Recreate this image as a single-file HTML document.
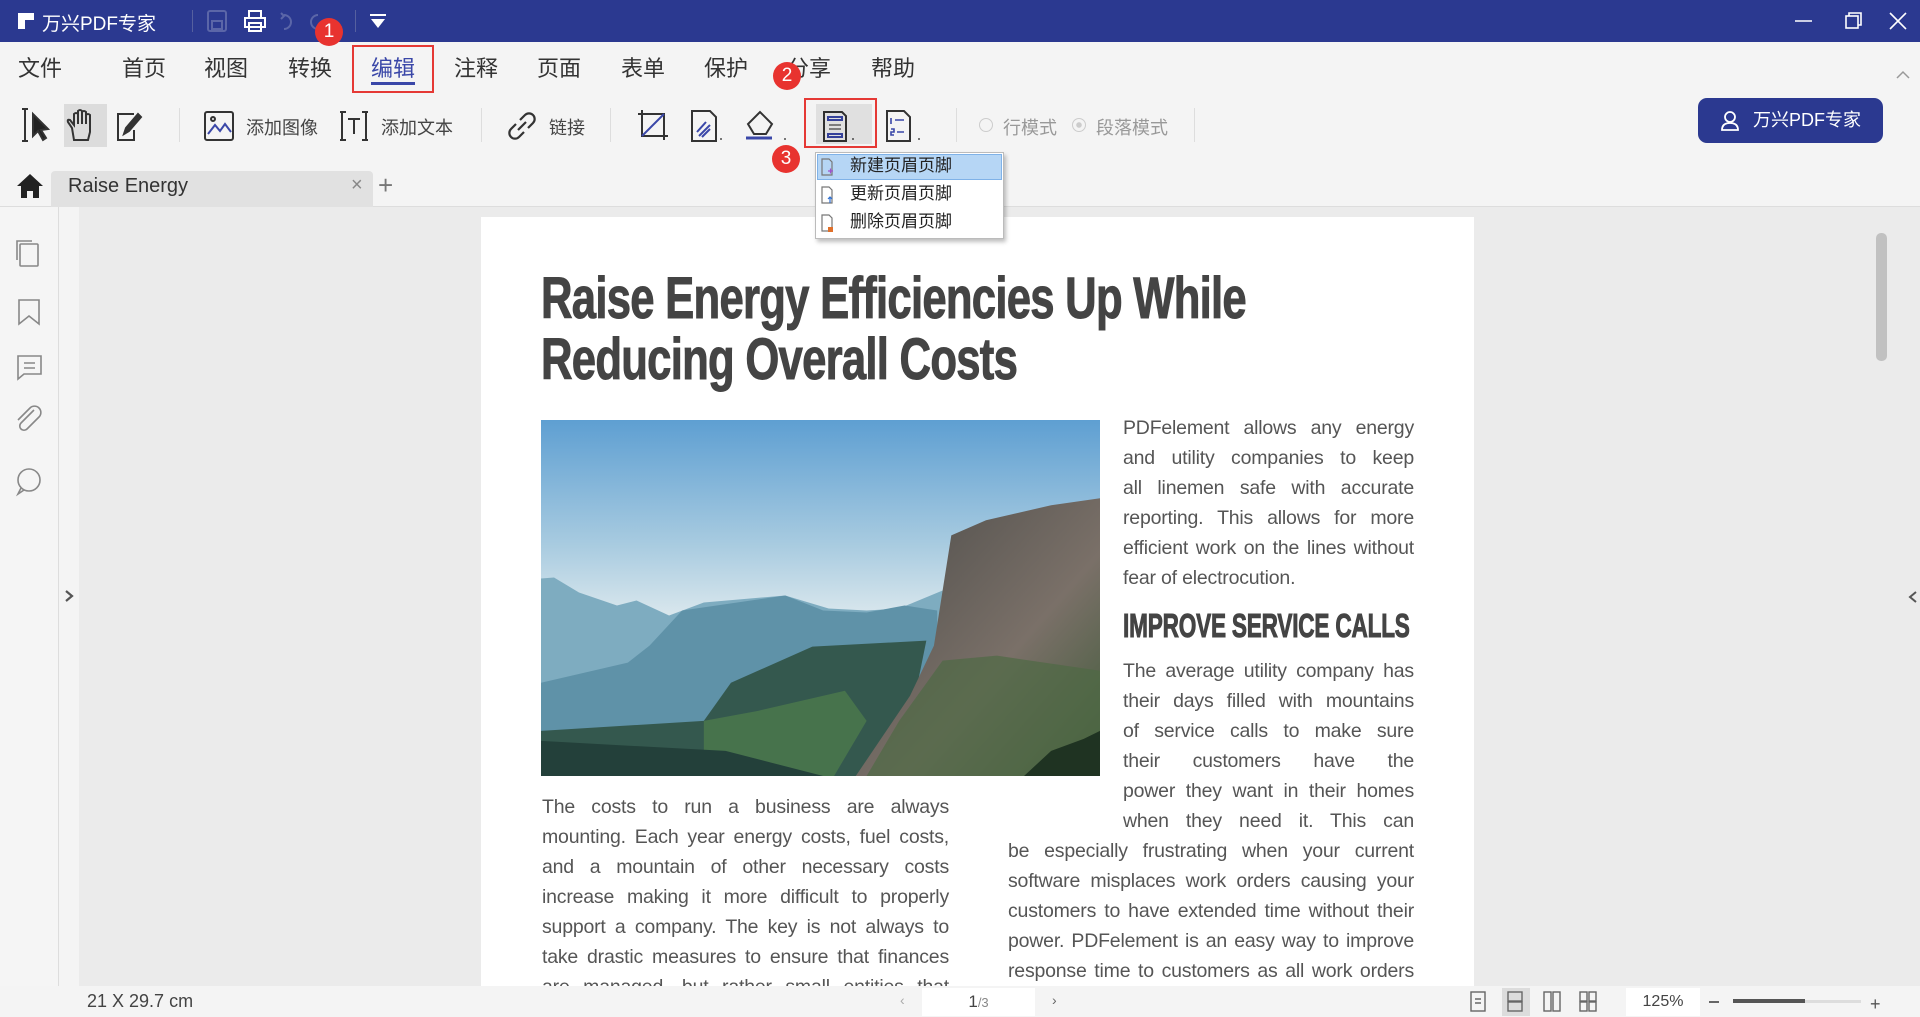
<!DOCTYPE html>
<html><head><meta charset="utf-8"><style>
*{margin:0;padding:0;box-sizing:border-box}
body{width:1920px;height:1016px;position:relative;overflow:hidden;background:#f4f4f4;font-family:"Liberation Sans","Noto Sans CJK SC",sans-serif;color:#333}
.a{position:absolute}
.menu{font-size:22px;color:#333;top:51px}
.tb{font-size:18px;color:#444;top:114px}
.circ{position:absolute;width:28px;height:28px;border-radius:50%;background:#e8332f;color:#fff;font-size:19px;text-align:center;line-height:28px}
.sep{position:absolute;top:108px;width:1px;height:34px;background:#ddd}
.ln{position:absolute;font-size:19.5px;color:#555;line-height:30px;height:30px;text-align:justify;text-align-last:justify;white-space:nowrap;letter-spacing:-0.2px}
.ln.l{text-align-last:left}
.dd{position:absolute;left:820px;width:180px;height:26px;font-size:17px;line-height:26px;padding-left:30px;color:#222}
.hd{position:absolute;font-weight:bold;color:#444;white-space:nowrap;transform-origin:0 0;-webkit-text-stroke:1px #444}
</style></head><body>
<!-- title bar -->
<div class="a" style="left:0;top:0;width:1920px;height:42px;background:#2b3990"></div>
<svg class="a" style="left:18px;top:13px" width="16" height="16"><rect x="0" y="0" width="16" height="7" fill="#fff"/><rect x="0" y="7" width="7" height="9" fill="#fff"/></svg>
<div class="a" style="left:42px;top:9px;font-size:19px;color:#fff">万兴PDF专家</div>
<div class="a" style="left:192px;top:10px;width:1px;height:22px;background:#56609f"></div>
<svg class="a" style="left:206px;top:9px" width="130" height="24" fill="none" stroke-width="2">
<rect x="2" y="2" width="18" height="20" rx="2" stroke="#5b66a8"/><rect x="6" y="12" width="10" height="8" stroke="#5b66a8"/>
<rect x="39" y="9" width="20" height="9" stroke="#fff"/><rect x="43" y="2" width="12" height="7" stroke="#fff"/><rect x="43" y="14" width="12" height="8" stroke="#fff"/>
<path d="M78 6 a7 7 0 1 1 0 14" stroke="#5b66a8"/><path d="M75 4 l3 3 -3 3" stroke="#5b66a8"/>
<path d="M112 6 a7 7 0 1 0 0 14" stroke="#5b66a8"/>
</svg>
<div class="a" style="left:355px;top:10px;width:1px;height:22px;background:#56609f"></div>
<svg class="a" style="left:369px;top:13px" width="18" height="16"><rect x="1" y="1" width="16" height="2" fill="#fff"/><path d="M2 6 L16 6 L9 15Z" fill="#fff"/></svg>
<svg class="a" style="left:1790px;top:8px" width="125" height="26" fill="none" stroke="#fff" stroke-width="1.6"><path d="M5 13 H22"/><rect x="56" y="8" width="12" height="12"/><path d="M59 8 V5 H71 V17 H68"/><path d="M100 5 L116 21 M116 5 L100 21"/></svg>
<div class="circ" style="left:315px;top:18px">1</div>
<!-- menu -->
<div class="a menu" style="left:18px">文件</div>
<div class="a menu" style="left:122px">首页</div>
<div class="a menu" style="left:204px">视图</div>
<div class="a menu" style="left:288px">转换</div>
<div class="a menu" style="left:371px;color:#3a47a8">编辑</div>
<div class="a" style="left:371px;top:82px;width:44px;height:3px;background:#3a47a8"></div>
<div class="a" style="left:352px;top:45px;width:82px;height:48px;border:2px solid #e53935"></div>
<div class="a menu" style="left:454px">注释</div>
<div class="a menu" style="left:537px">页面</div>
<div class="a menu" style="left:621px">表单</div>
<div class="a menu" style="left:704px">保护</div>
<div class="a menu" style="left:787px">分享</div>
<div class="a menu" style="left:871px">帮助</div>
<div class="circ" style="left:773px;top:62px">2</div>
<svg class="a" style="left:1895px;top:70px" width="16" height="10" fill="none" stroke="#999" stroke-width="1.5"><path d="M2 8 L8 2 L14 8"/></svg>
<!-- toolbar -->
<div class="a" style="left:64px;top:104px;width:43px;height:43px;background:#dcdcdc"></div>
<svg class="a" style="left:18px;top:106px" width="140" height="40" fill="none" stroke="#333" stroke-width="2">
<path d="M4 3 H10 M7 3 V35 M4 35 H10"/><path d="M15 8 L15 30 L20 25 L25 34 L28 32 L23 24 L30 23 Z" fill="#222"/>
<path d="M56 34 L54 22 L50 16 Q49 13 52 14 L56 19 V8 Q58 6 60 8 V18 V5 Q62 3 64 5 V18 V6 Q66 4 68 6 V18 V9 Q70 7 72 9 V26 L70 34 Z"/>
<path d="M116 8 H100 V34 H116 V24"/><path d="M106 28 L108 22 L120 8 L123 11 L111 25 Z" fill="#333"/>
</svg>
<div class="sep" style="left:179px"></div>
<svg class="a" style="left:203px;top:110px" width="32" height="32" fill="none" stroke="#333" stroke-width="2"><rect x="2" y="2" width="28" height="28" rx="2"/><path d="M5 24 L12 15 L17 21 L22 14 L28 22" stroke="#3a47a8"/><circle cx="10" cy="9" r="2"/></svg>
<div class="a tb" style="left:246px">添加图像</div>
<svg class="a" style="left:338px;top:110px" width="32" height="32" fill="none" stroke="#333" stroke-width="2"><path d="M4 2 V30 M2 2 H8 M2 30 H8 M28 2 V30 M24 2 H30 M24 30 H30"/><path d="M10 9 H22 M16 9 V24"/></svg>
<div class="a tb" style="left:381px">添加文本</div>
<div class="sep" style="left:481px"></div>
<svg class="a" style="left:506px;top:110px" width="32" height="32" fill="none" stroke="#333" stroke-width="2.2"><path d="M14 10 L19 5 a5 5 0 0 1 8 8 L22 18"/><path d="M18 22 L13 27 a5 5 0 0 1 -8 -8 L10 14"/><path d="M12 20 L20 12"/></svg>
<div class="a tb" style="left:549px">链接</div>
<div class="sep" style="left:610px"></div>
<svg class="a" style="left:636px;top:108px" width="290" height="36" fill="none" stroke="#333" stroke-width="2">
<path d="M6 2 V28 H32 M2 6 H28 V32"/><path d="M6 28 L28 6" stroke="#3a47a8"/>
<path d="M56 3 H74 L80 9 V33 H56 Z"/><path d="M61 24 L70 14 M63 28 L74 17 M66 29 L74 21" stroke="#3a47a8"/>
<path d="M84 31 h2" stroke="#777"/>
<path d="M118 26 L112 16 L124 4 L136 16 L130 26 Z"/><path d="M110 30 H136" stroke="#3a47a8" stroke-width="3"/>
<path d="M148 31 h2" stroke="#777"/>
<path d="M188 4 H206 L210 8 V33 H188 Z"/><rect x="192" y="9" width="14" height="3" stroke="#3a47a8"/><path d="M193 17 H205 M193 21 H205" stroke="#888"/><rect x="192" y="26" width="14" height="3" stroke="#3a47a8"/>
<path d="M216 31 h2" stroke="#777"/>
<path d="M251 3 H268 L274 9 V33 H251 Z"/><path d="M255 10 v6 M259 12 H268 M255 21 h3 v3 h-3 v3 h3 M261 24 H268" stroke="#3a47a8" stroke-width="1.6"/>
<path d="M282 31 h2" stroke="#777"/>
</svg>
<div class="a" style="left:804px;top:98px;width:73px;height:50px;border:2px solid #e53935"></div>
<div class="a" style="left:816px;top:104px;width:56px;height:40px;background:rgba(0,0,0,0.08)"></div>
<div class="sep" style="left:956px"></div>
<div class="a" style="left:979px;top:118px;width:14px;height:14px;border-radius:50%;border:1.5px solid #ccc"></div>
<div class="a tb" style="left:1003px;color:#999">行模式</div>
<div class="a" style="left:1072px;top:118px;width:14px;height:14px;border-radius:50%;border:1.5px solid #ccc;background:radial-gradient(#ccc 30%,transparent 35%)"></div>
<div class="a tb" style="left:1096px;color:#999">段落模式</div>
<div class="sep" style="left:1194px"></div>
<div class="a" style="left:1698px;top:98px;width:185px;height:45px;border-radius:9px;background:#2b3990;color:#fff;font-size:18px;line-height:45px;padding-left:55px">万兴PDF专家</div>
<svg class="a" style="left:1720px;top:110px" width="20" height="22" fill="none" stroke="#fff" stroke-width="1.8"><circle cx="10" cy="7" r="5"/><path d="M2 20 Q2 13 10 13 Q18 13 18 20 Z"/></svg>
<div class="circ" style="left:772px;top:145px">3</div>
<!-- tabs -->
<div class="a" style="left:0;top:206px;width:1920px;height:1px;background:#ddd"></div>
<svg class="a" style="left:15px;top:172px" width="30" height="28"><path d="M15 2 L2 14 H6 V26 H12 V19 H18 V26 H24 V14 H28 Z" fill="#222"/></svg>
<div class="a" style="left:51px;top:171px;width:322px;height:36px;background:#e1e1e1;border-radius:4px 4px 0 0"></div>
<div class="a" style="left:68px;top:175px;font-size:20px;color:#333">Raise Energy</div>
<div class="a" style="left:351px;top:174px;font-size:20px;color:#888">×</div>
<div class="a" style="left:378px;top:170px;font-size:26px;color:#777">+</div>
<!-- sidebar -->
<div class="a" style="left:0;top:207px;width:58px;height:779px;background:#f5f5f5"></div>
<div class="a" style="left:58px;top:207px;width:1px;height:779px;background:#ddd"></div>
<div class="a" style="left:59px;top:207px;width:20px;height:779px;background:#f4f4f4"></div>
<svg class="a" style="left:14px;top:238px" width="30" height="260" fill="none" stroke="#888" stroke-width="1.6">
<path d="M3 22 V3 H18"/><rect x="6" y="6" width="18" height="22" rx="1"/>
<path d="M5 62 V86 L15 78 L25 86 V62 Z"/>
<path d="M4 118 H27 V136 H10 L4 141 Z"/><path d="M10 125 H21 M10 130 H21"/>
<path d="M20 172 L7 185 a4 4 0 0 0 6 6 L25 179 a6 6 0 0 0 -9 -9 L4 182"/>
<circle cx="15" cy="242" r="11"/><path d="M7 250 L4 256 L10 252"/>
</svg>
<svg class="a" style="left:64px;top:589px" width="10" height="14"><path d="M2 2 L8 7 L2 12" fill="none" stroke="#555" stroke-width="2.2"/></svg>
<!-- content bg -->
<div class="a" style="left:79px;top:207px;width:1841px;height:779px;background:#ebebeb"></div>
<div class="a" style="left:1876px;top:233px;width:11px;height:128px;border-radius:5px;background:#c1c1c1"></div>
<svg class="a" style="left:1908px;top:590px" width="10" height="14"><path d="M8 2 L2 7 L8 12" fill="none" stroke="#555" stroke-width="2"/></svg>
<!-- page -->
<div class="a" style="left:481px;top:217px;width:993px;height:769px;background:#fff"></div>
<div class="hd" style="left:541px;top:268px;font-size:58px;line-height:61px;letter-spacing:-1px;transform:scaleX(0.753)">Raise Energy Efficiencies Up While<br>Reducing Overall Costs</div>
<svg class="a" style="left:541px;top:420px" width="559" height="356" viewBox="0 0 515 355" preserveAspectRatio="none">
<defs><linearGradient id="sky" x1="0" y1="0" x2="0" y2="1"><stop offset="0" stop-color="#5e9fd2"/><stop offset="0.35" stop-color="#a8cbe0"/><stop offset="0.6" stop-color="#e6eef0"/><stop offset="1" stop-color="#e4ecee"/></linearGradient>
<linearGradient id="cl" x1="0" y1="0" x2="1" y2="1"><stop offset="0" stop-color="#4a4a48"/><stop offset="0.6" stop-color="#7a7068"/><stop offset="1" stop-color="#3e5a38"/></linearGradient></defs>
<rect width="515" height="355" fill="url(#sky)"/>
<path d="M0 158 L12 157 L35 172 L70 185 L88 180 L118 195 L150 182 L225 175 L265 188 L300 190 L330 188 L370 170 L370 355 L0 355Z" fill="#7eacc0"/>
<path d="M0 262 L80 242 L100 225 L130 190 L225 175 L260 190 L300 192 L335 185 L365 190 L365 355 L0 355Z" fill="#5f92a8"/>
<path d="M0 310 L150 300 L175 262 L250 226 L355 220 L340 300 L300 355 L0 355Z" fill="#34584e"/>
<path d="M150 300 L200 290 L280 270 L300 300 L270 355 L150 355Z" fill="#4c7a4c" opacity="0.8"/>
<path d="M0 320 L170 330 L260 355 L0 355Z" fill="#23403a"/>
<path d="M290 355 L340 275 L362 225 L378 115 L410 100 L470 85 L515 78 L515 355Z" fill="url(#cl)"/>
<path d="M330 300 L370 240 L420 235 L515 250 L515 355 L300 355Z" fill="#4f6a44" opacity="0.7"/>
<path d="M445 355 L470 330 L500 318 L515 310 L515 355Z" fill="#1f3322"/>
</svg>
<!-- right column -->
<div class="ln" style="left:1123px;top:413px;width:291px">PDFelement allows any energy</div>
<div class="ln" style="left:1123px;top:443px;width:291px">and utility companies to keep</div>
<div class="ln" style="left:1123px;top:473px;width:291px">all linemen safe with accurate</div>
<div class="ln" style="left:1123px;top:503px;width:291px">reporting. This allows for more</div>
<div class="ln" style="left:1123px;top:533px;width:291px">efficient work on the lines without</div>
<div class="ln l" style="left:1123px;top:563px;width:291px">fear of electrocution.</div>
<div class="hd" style="left:1123px;top:606px;font-size:33px;line-height:40px;letter-spacing:-0.3px;transform:scaleX(0.685)">IMPROVE SERVICE CALLS</div>
<div class="ln" style="left:1123px;top:656px;width:291px">The average utility company has</div>
<div class="ln" style="left:1123px;top:686px;width:291px">their days filled with mountains</div>
<div class="ln" style="left:1123px;top:716px;width:291px">of service calls to make sure</div>
<div class="ln" style="left:1123px;top:746px;width:291px">their customers have the</div>
<div class="ln" style="left:1123px;top:776px;width:291px">power they want in their homes</div>
<div class="ln" style="left:1123px;top:806px;width:291px">when they need it. This can</div>
<div class="ln" style="left:1008px;top:836px;width:406px">be especially frustrating when your current</div>
<div class="ln" style="left:1008px;top:866px;width:406px">software misplaces work orders causing your</div>
<div class="ln" style="left:1008px;top:896px;width:406px">customers to have extended time without their</div>
<div class="ln" style="left:1008px;top:926px;width:406px">power. PDFelement is an easy way to improve</div>
<div class="ln" style="left:1008px;top:956px;width:406px">response time to customers as all work orders</div>
<!-- left column -->
<div class="ln" style="left:542px;top:792px;width:407px">The costs to run a business are always</div>
<div class="ln" style="left:542px;top:822px;width:407px">mounting. Each year energy costs, fuel costs,</div>
<div class="ln" style="left:542px;top:852px;width:407px">and a mountain of other necessary costs</div>
<div class="ln" style="left:542px;top:882px;width:407px">increase making it more difficult to properly</div>
<div class="ln" style="left:542px;top:912px;width:407px">support a company. The key is not always to</div>
<div class="ln" style="left:542px;top:942px;width:407px">take drastic measures to ensure that finances</div>
<div class="ln" style="left:542px;top:972px;width:407px">are managed, but rather small entities that</div>
<!-- status bar -->
<div class="a" style="left:0;top:986px;width:1920px;height:30px;background:#f4f4f4"></div>
<div class="a" style="left:87px;top:991px;font-size:18px;color:#444">21 X 29.7 cm</div>
<div class="a" style="left:900px;top:992px;font-size:14px;color:#aaa">‹</div>
<div class="a" style="left:922px;top:988px;width:113px;height:28px;background:#fff;text-align:center;font-size:17px;line-height:28px;color:#444">1<span style="font-size:13px;color:#888">/3</span></div>
<div class="a" style="left:1052px;top:992px;font-size:14px;color:#666">›</div>
<div class="a" style="left:1502px;top:988px;width:28px;height:28px;background:#dcdcdc"></div>
<svg class="a" style="left:1468px;top:990px" width="140" height="24" fill="none" stroke="#666" stroke-width="1.4">
<rect x="3" y="2" width="14" height="19"/><path d="M7 9 h6 M7 13 h6"/>
<rect x="40" y="2" width="14" height="9"/><rect x="40" y="12" width="14" height="9"/>
<rect x="76" y="2" width="7" height="19"/><rect x="85" y="2" width="7" height="19"/>
<rect x="112" y="2" width="7" height="9"/><rect x="121" y="2" width="7" height="9"/><rect x="112" y="12" width="7" height="9"/><rect x="121" y="12" width="7" height="9"/>
</svg>
<div class="a" style="left:1626px;top:988px;width:74px;height:28px;background:#fff;text-align:center;font-size:16px;line-height:28px;color:#444">125%</div>
<div class="a" style="left:1709px;top:1001px;width:10px;height:2px;background:#666"></div>
<div class="a" style="left:1733px;top:1000px;width:128px;height:3px;background:#ddd"></div>
<div class="a" style="left:1733px;top:999px;width:72px;height:4px;background:#555"></div>
<div class="a" style="left:1870px;top:994px;font-size:18px;color:#555">+</div>
<!-- dropdown -->
<div class="a" style="left:815px;top:152px;width:189px;height:87px;background:#fff;border:1px solid #bbb;box-shadow:2px 3px 4px rgba(0,0,0,0.25)"></div>
<div class="a" style="left:817px;top:154px;width:185px;height:26px;background:#b6d6f5;border:1px solid #7fb2e8"></div>
<div class="dd" style="top:153px">新建页眉页脚</div>
<div class="dd" style="top:181px">更新页眉页脚</div>
<div class="dd" style="top:209px">删除页眉页脚</div>
<svg class="a" style="left:820px;top:157px" width="14" height="80" fill="none" stroke="#777" stroke-width="1.2">
<path d="M2 2 H9 L12 5 V18 H2 Z"/><path d="M8 14 h5 M10.5 11.5 v5" stroke="#a050d0"/>
<path d="M2 30 H9 L12 33 V46 H2 Z"/><path d="M10 46 v-6 M8 42 l2 -2 2 2" stroke="#2e6fd0"/>
<path d="M2 58 H9 L12 61 V74 H2 Z"/><rect x="8" y="70" width="5" height="5" fill="#e0702a" stroke="none"/>
</svg>
</body></html>
